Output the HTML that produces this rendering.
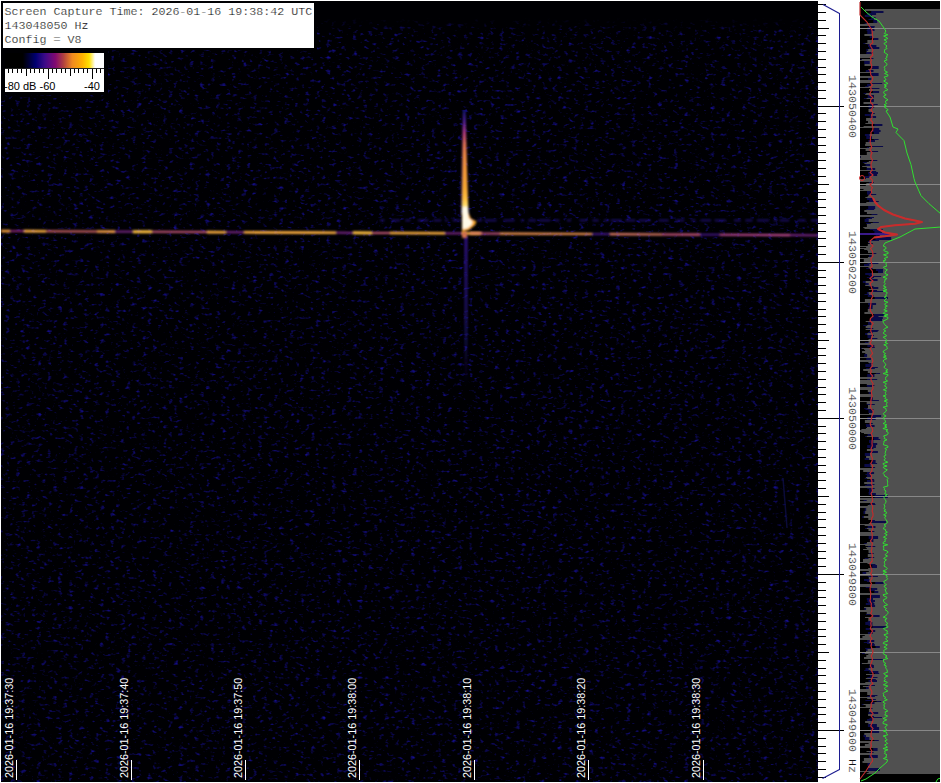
<!DOCTYPE html><html><head><meta charset="utf-8"><style>
html,body{margin:0;padding:0;}body{width:941px;height:783px;position:relative;overflow:hidden;background:#fff;}
.a{position:absolute;}
.mono{font-family:"Liberation Mono",monospace;}
.sans{font-family:"Liberation Sans",sans-serif;}
</style></head><body>
<svg class="a" style="left:0;top:0" width="941" height="783"><defs><filter id="nz" x="0" y="0" width="100%" height="100%" color-interpolation-filters="sRGB"><feTurbulence type="fractalNoise" baseFrequency="0.19 0.3" numOctaves="2" seed="3" result="t"/><feColorMatrix in="t" type="matrix" values="0 0 0 0 0.09  0 0 0 0 0.06  0 0 0 0 0.62  2.9 0 0 0 -1.72" /></filter><linearGradient id="met" gradientUnits="userSpaceOnUse" x1="0" y1="111" x2="0" y2="221"><stop offset="0" stop-color="#1a1a80"/><stop offset="0.09" stop-color="#5020a0"/><stop offset="0.2" stop-color="#b03a80"/><stop offset="0.3" stop-color="#e07050"/><stop offset="0.4" stop-color="#f08a40"/><stop offset="0.7" stop-color="#f8a830"/><stop offset="0.8" stop-color="#ffc040"/><stop offset="0.86" stop-color="#ffe070"/><stop offset="0.9" stop-color="#fff8e0"/><stop offset="1" stop-color="#ffffff"/></linearGradient><filter id="bl" x="-50%" y="-50%" width="200%" height="200%"><feGaussianBlur stdDeviation="0.8"/></filter><linearGradient id="vfade" x1="0" y1="0" x2="0" y2="1"><stop offset="0" stop-color="#3a1aa0" stop-opacity="0.8"/><stop offset="0.6" stop-color="#2a1a9a" stop-opacity="0.5"/><stop offset="1" stop-color="#2a1a9a" stop-opacity="0"/></linearGradient><linearGradient id="topfade" x1="0" y1="0" x2="0" y2="1"><stop offset="0" stop-color="#000003"/><stop offset="0.53" stop-color="#000003"/><stop offset="1" stop-color="#000003" stop-opacity="0"/></linearGradient></defs><rect x="1" y="1" width="817" height="781" fill="#000003"/><rect x="1" y="1" width="817" height="781" filter="url(#nz)"/><rect x="1" y="1" width="817" height="32" fill="url(#topfade)"/><rect x="1" y="1" width="316" height="49" fill="#000003"/><rect x="1" y="50" width="107" height="45" fill="#000003"/><path d="M783 478 L787 528" stroke="#2020a0" stroke-width="1.5" opacity="0.35" fill="none"/><path d="M380 219.3h4.5v2.2h-4.5zM391.3 219.3h8.7v2.2h-8.7zM405.4 219.3h4.9v2.2h-4.9zM417.9 219.3h10.3v2.2h-10.3zM433.7 219.3h7.5v2.2h-7.5zM444.9 219.3h3v2.2h-3zM452.6 219.3h8.3v2.2h-8.3zM463.3 219.3h10.1v2.2h-10.1zM477.1 219.3h5.1v2.2h-5.1zM484.5 219.3h12v2.2h-12zM503.6 219.3h10.9v2.2h-10.9zM520.8 219.3h3.3v2.2h-3.3zM528.4 219.3h7.5v2.2h-7.5zM538.7 219.3h11.6v2.2h-11.6zM554.8 219.3h4.4v2.2h-4.4zM567 219.3h4.1v2.2h-4.1zM579.6 219.3h7.1v2.2h-7.1zM592.5 219.3h6.1v2.2h-6.1zM604 219.3h4.7v2.2h-4.7zM610.9 219.3h10.8v2.2h-10.8zM625.4 219.3h10v2.2h-10zM638.9 219.3h11.7v2.2h-11.7zM658.8 219.3h9.8v2.2h-9.8zM676 219.3h8.2v2.2h-8.2zM691.3 219.3h4.1v2.2h-4.1zM700.7 219.3h10.4v2.2h-10.4zM714.6 219.3h11.3v2.2h-11.3zM734.1 219.3h6.7v2.2h-6.7zM745.4 219.3h7.1v2.2h-7.1zM757.1 219.3h12v2.2h-12zM773.8 219.3h3.2v2.2h-3.2zM779.7 219.3h9.5v2.2h-9.5zM798.1 219.3h7.5v2.2h-7.5zM811 219.3h7v2.2h-7z" fill="#2a18a0" opacity="0.55" filter="url(#bl)"/><rect x="464.5" y="236" width="3" height="150" fill="url(#vfade)" filter="url(#bl)"/><g filter="url(#bl)"><path d="M1 229.7L10 229.8L10 232.4L1 232.3Z" fill="#f8a040"/><path d="M10 230.2L24 230.2L24 232L10 232Z" fill="#9a2c82"/><path d="M24 229.8L46 229.9L46 232.5L24 232.4Z" fill="#ffb040"/><path d="M46 230.2L97 230.5L97 232.6L46 232.3Z" fill="#d8686a"/><path d="M97 230.2L115 230.3L115 232.9L97 232.8Z" fill="#f8a048"/><path d="M115 230.7L133 230.8L133 232.6L115 232.5Z" fill="#8a2a98"/><path d="M133 230.2L152 230.3L152 233.3L133 233.2Z" fill="#ffc040"/><path d="M152 230.7L207 231L207 233.1L152 232.8Z" fill="#c8587a"/><path d="M207 230.8L226 230.9L226 233.5L207 233.4Z" fill="#ffb040"/><path d="M226 231.3L244 231.4L244 233.2L226 233.1Z" fill="#8a2a98"/><path d="M244 231L316 231.3L316 233.9L244 233.6Z" fill="#ffb040"/><path d="M316 231.3L336 231.4L336 234L316 233.9Z" fill="#ffb040"/><path d="M336 231.8L353 231.9L353 233.7L336 233.6Z" fill="#8a2a98"/><path d="M353 231.3L372 231.4L372 234.4L353 234.3Z" fill="#ffc040"/><path d="M372 231.9L390 232L390 234.1L372 234Z" fill="#c8587a"/><path d="M390 231.7L445 232L445 234.6L390 234.3Z" fill="#ffb040"/><path d="M445 232.4L462 232.5L462 234.3L445 234.2Z" fill="#8a2a98"/><path d="M462 232.1L480 232.2L480 234.8L462 234.7Z" fill="#ffb040"/><path d="M480 232.4L500 232.5L500 234.7L480 234.5Z" fill="#b85078"/><path d="M500 232.5L592 233L592 235.1L500 234.7Z" fill="#f89850"/><path d="M592 233.2L610 233.3L610 235.1L592 235Z" fill="#4a1a90"/><path d="M610 233.1L662 233.4L662 235.5L610 235.2Z" fill="#e88068"/><path d="M662 233.4L700 233.6L700 235.7L662 235.5Z" fill="#d05880"/><path d="M700 233.7L720 233.8L720 235.6L700 235.5Z" fill="#4a1a90"/><path d="M720 233.7L790 234.1L790 236.2L720 235.8Z" fill="#c04890"/><path d="M790 234.2L818 234.4L818 236.2L790 236Z" fill="#8a2a98"/></g><g filter="url(#bl)"><path d="M462.5 125 L465.5 125 L468.5 215 L460.5 215 Z" fill="#3a1080" opacity="0.6"/><path d="M463 111 L465.4 111 L467.6 190 L468.5 216 L462 216 L462.2 190 Z" fill="url(#met)"/><path d="M462 213 L468.5 213 L471 218.5 L476.5 221.5 L475 225 L469 230 L462 232 Z" fill="#f8a830"/><path d="M462.3 207 L467.8 207 L468.6 218 L472.5 221.5 L471.5 225 L467 228.5 L462.3 229 Z" fill="#fffae8"/><rect x="462" y="232" width="5" height="6" fill="#d07050"/><rect x="470" y="232" width="12" height="2.4" fill="#d87a60"/></g><rect x="16" y="760" width="1" height="20" fill="#fff"/><rect x="131" y="760" width="1" height="20" fill="#fff"/><rect x="245" y="760" width="1" height="20" fill="#fff"/><rect x="359" y="760" width="1" height="20" fill="#fff"/><rect x="474" y="760" width="1" height="20" fill="#fff"/><rect x="588" y="760" width="1" height="20" fill="#fff"/><rect x="703" y="760" width="1" height="20" fill="#fff"/><rect x="818" y="1" width="42" height="781" fill="#fff"/><path d="M818 4h8v1h-8zM818 12h8v1h-8zM818 20h8v1h-8zM818 28h11v1h-11zM818 35h8v1h-8zM818 43h8v1h-8zM818 51h8v1h-8zM818 59h8v1h-8zM818 67h8v1h-8zM818 74h8v1h-8zM818 82h8v1h-8zM818 90h8v1h-8zM818 98h8v1h-8zM818 106h26v1h-26zM818 113h8v1h-8zM818 121h8v1h-8zM818 129h8v1h-8zM818 137h8v1h-8zM818 145h8v1h-8zM818 152h8v1h-8zM818 160h8v1h-8zM818 168h8v1h-8zM818 176h8v1h-8zM818 184h11v1h-11zM818 192h8v1h-8zM818 199h8v1h-8zM818 207h8v1h-8zM818 215h8v1h-8zM818 223h8v1h-8zM818 231h8v1h-8zM818 238h8v1h-8zM818 246h8v1h-8zM818 254h8v1h-8zM818 262h26v1h-26zM818 270h8v1h-8zM818 277h8v1h-8zM818 285h8v1h-8zM818 293h8v1h-8zM818 301h8v1h-8zM818 309h8v1h-8zM818 316h8v1h-8zM818 324h8v1h-8zM818 332h8v1h-8zM818 340h11v1h-11zM818 348h8v1h-8zM818 355h8v1h-8zM818 363h8v1h-8zM818 371h8v1h-8zM818 379h8v1h-8zM818 387h8v1h-8zM818 394h8v1h-8zM818 402h8v1h-8zM818 410h8v1h-8zM818 418h26v1h-26zM818 426h8v1h-8zM818 433h8v1h-8zM818 441h8v1h-8zM818 449h8v1h-8zM818 457h8v1h-8zM818 465h8v1h-8zM818 472h8v1h-8zM818 480h8v1h-8zM818 488h8v1h-8zM818 496h11v1h-11zM818 504h8v1h-8zM818 512h8v1h-8zM818 519h8v1h-8zM818 527h8v1h-8zM818 535h8v1h-8zM818 543h8v1h-8zM818 551h8v1h-8zM818 558h8v1h-8zM818 566h8v1h-8zM818 574h26v1h-26zM818 582h8v1h-8zM818 590h8v1h-8zM818 597h8v1h-8zM818 605h8v1h-8zM818 613h8v1h-8zM818 621h8v1h-8zM818 629h8v1h-8zM818 636h8v1h-8zM818 644h8v1h-8zM818 652h11v1h-11zM818 660h8v1h-8zM818 668h8v1h-8zM818 675h8v1h-8zM818 683h8v1h-8zM818 691h8v1h-8zM818 699h8v1h-8zM818 707h8v1h-8zM818 714h8v1h-8zM818 722h8v1h-8zM818 730h26v1h-26zM818 738h8v1h-8zM818 746h8v1h-8zM818 753h8v1h-8zM818 761h8v1h-8zM818 769h8v1h-8zM818 777h8v1h-8z" fill="#000" shape-rendering="crispEdges"/><path d="M823 4.5 L839.5 13.5" stroke="#1c1c90" stroke-width="1.1" fill="none"/><rect x="839" y="13" width="1" height="757" fill="#1c1c90"/><path d="M839.5 769.5 L822.5 778.5" stroke="#1c1c90" stroke-width="1.1" fill="none"/><rect x="860" y="1" width="80" height="781" fill="#000"/><rect x="860" y="9" width="80" height="765" fill="#505050"/><path d="M860 11h23.5v2h-23.5zM860 13h16.1v2h-16.1zM860 15h11.9v2h-11.9zM860 17h15.6v2h-15.6zM860 19h14.1v1h-14.1zM860 20h17.2v3h-17.2zM860 23h6.6v1h-6.6zM860 26h14.7v1h-14.7zM860 27h14.4v3h-14.4zM860 30h14.6v1h-14.6zM860 31h11.7v3h-11.7zM860 36h12.4v2h-12.4zM860 38h18.4v2h-18.4zM860 43h5.4v1h-5.4zM860 44h11.6v1h-11.6zM860 45h16.4v2h-16.4zM860 47h19.3v2h-19.3zM860 49h8.2v2h-8.2zM860 52h12.8v2h-12.8zM860 58h13.5v1h-13.5zM860 59h1.9v1h-1.9zM860 61h9.7v3h-9.7zM860 66h18.7v3h-18.7zM860 70h13.5v2h-13.5zM860 73h18.6v3h-18.6zM860 78h11.3v2h-11.3zM860 83h22.2v1h-22.2zM860 84h10.9v2h-10.9zM860 86h8.6v1h-8.6zM860 88h19.4v1h-19.4zM860 91h19.1v2h-19.1zM860 93h6.2v1h-6.2zM860 95h14v3h-14zM860 98h6.6v1h-6.6zM860 99h13.9v3h-13.9zM860 104h17.7v1h-17.7zM860 105h14.2v3h-14.2zM860 108h12.9v1h-12.9zM860 112h12.4v1h-12.4zM860 113h14.8v1h-14.8zM860 114h11.6v2h-11.6zM860 116h16.1v2h-16.1zM860 124h22.4v2h-22.4zM860 128h19.2v2h-19.2zM860 130h20.6v2h-20.6zM860 132h19.2v2h-19.2zM860 134h9.6v2h-9.6zM860 136h12v3h-12zM860 139h18.6v1h-18.6zM860 140h15v2h-15zM860 146h23.1v1h-23.1zM860 147h9v1h-9zM860 151h18.1v1h-18.1zM860 156h0.7v2h-0.7zM860 160h17.3v1h-17.3zM860 162h6.8v1h-6.8zM860 164h10.9v2h-10.9zM860 168h15.2v2h-15.2zM860 171h16.2v1h-16.2zM860 172h18v2h-18zM860 174h17.1v2h-17.1zM860 176h9.5v2h-9.5zM860 182h13.9v1h-13.9zM860 191h11.8v3h-11.8zM860 194h16.2v1h-16.2zM860 198h13.4v2h-13.4zM860 200h14.5v1h-14.5zM860 201h18.8v1h-18.8zM860 206h15.2v3h-15.2zM860 209h14.2v1h-14.2zM860 214h17.4v1h-17.4zM860 217h14v1h-14zM860 218h12v1h-12zM860 219h8.7v3h-8.7zM860 222h18.8v1h-18.8zM860 223h10.8v1h-10.8zM860 229h22.8v1h-22.8zM860 230h21.1v1h-21.1zM860 231h22.1v2h-22.1zM860 233h24.5v1h-24.5zM860 234h29.1v1h-29.1zM860 235h19.8v2h-19.8zM860 237h31.2v1h-31.2zM860 238h31.2v2h-31.2zM860 240h19v1h-19zM860 241h10.2v1h-10.2zM860 243h12.8v1h-12.8zM860 253h16.3v1h-16.3zM860 255h11.6v2h-11.6zM860 262h18.4v2h-18.4zM860 264h9.4v2h-9.4zM860 268h12.6v1h-12.6zM860 269h23.1v2h-23.1zM860 271h23v2h-23zM860 273h11.7v2h-11.7zM860 275h12v1h-12zM860 276h21.2v1h-21.2zM860 277h14v1h-14zM860 278h12.4v1h-12.4zM860 279h17.6v2h-17.6zM860 281h5.7v2h-5.7zM860 283h8.7v2h-8.7zM860 286h13.5v1h-13.5zM860 287h18.3v2h-18.3zM860 290h17.1v1h-17.1zM860 291h23.7v1h-23.7zM860 292h8.6v2h-8.6zM860 294h9.1v1h-9.1zM860 295h13.4v2h-13.4zM860 297h28v2h-28zM860 303h16.1v2h-16.1zM860 305h12.7v2h-12.7zM860 307h12.6v2h-12.6zM860 314h24.6v2h-24.6zM860 316h18.5v1h-18.5zM860 317h22.8v2h-22.8zM860 319h22v2h-22zM860 322h11.2v3h-11.2zM860 325h7.2v1h-7.2zM860 328h13.3v1h-13.3zM860 330h18.6v1h-18.6zM860 331h17.7v1h-17.7zM860 332h12.6v1h-12.6zM860 333h7.4v2h-7.4zM860 335h13.9v1h-13.9zM860 336h11.1v2h-11.1zM860 338h17.4v1h-17.4zM860 342h8.5v1h-8.5zM860 345h14.3v2h-14.3zM860 347h14.8v1h-14.8zM860 348h1.8v1h-1.8zM860 354h7.1v3h-7.1zM860 358h10.9v2h-10.9zM860 363h12.5v1h-12.5zM860 364h11.5v3h-11.5zM860 367h17.8v1h-17.8zM860 368h14.8v1h-14.8zM860 373h20.1v1h-20.1zM860 374h14.4v3h-14.4zM860 379h17.2v1h-17.2zM860 385h14.4v1h-14.4zM860 386h12.1v1h-12.1zM860 392h11.3v2h-11.3zM860 397h12.8v3h-12.8zM860 400h18.9v1h-18.9zM860 404h14.8v1h-14.8zM860 408h7.5v1h-7.5zM860 409h13.4v1h-13.4zM860 410h12.8v3h-12.8zM860 415h21.2v2h-21.2zM860 417h15.7v3h-15.7zM860 423h12.8v1h-12.8zM860 424h9.8v1h-9.8zM860 425h14.6v2h-14.6zM860 434h11.3v2h-11.3zM860 436h6.8v1h-6.8zM860 437h18.6v2h-18.6zM860 439h20.3v1h-20.3zM860 440h13.3v3h-13.3zM860 443h17.2v2h-17.2zM860 445h15.9v3h-15.9zM860 448h13.5v1h-13.5zM860 451h17.9v2h-17.9zM860 453h10v3h-10zM860 458h9.1v2h-9.1zM860 460h15.6v3h-15.6zM860 463h17.1v1h-17.1zM860 464h10.6v3h-10.6zM860 467h15.1v1h-15.1zM860 472h14.1v2h-14.1zM860 474h11.1v1h-11.1zM860 475h11v2h-11zM860 478h7.1v1h-7.1zM860 479h14.1v1h-14.1zM860 480h14.3v2h-14.3zM860 484h14.5v1h-14.5zM860 485h11.9v1h-11.9zM860 488h14.6v1h-14.6zM860 489h12.5v3h-12.5zM860 492h11.2v1h-11.2zM860 493h15.9v2h-15.9zM860 495h27.9v3h-27.9zM860 500h6.7v1h-6.7zM860 503h14.9v1h-14.9zM860 504h15.5v1h-15.5zM860 508h6.2v3h-6.2zM860 511h5.2v3h-5.2zM860 516h3.8v2h-3.8zM860 520h14.9v1h-14.9zM860 521h25.9v2h-25.9zM860 526h15.5v2h-15.5zM860 528h6.8v1h-6.8zM860 531h14.4v1h-14.4zM860 536h18.1v3h-18.1zM860 539h13.4v3h-13.4zM860 543h6.6v1h-6.6zM860 546h15.3v1h-15.3zM860 553h13.7v1h-13.7zM860 557h14.2v1h-14.2zM860 558h8.5v1h-8.5zM860 564h15.5v1h-15.5zM860 565h17v3h-17zM860 572h6.2v3h-6.2zM860 576h17.9v1h-17.9zM860 579h9.5v2h-9.5zM860 581h9.5v1h-9.5zM860 582h23.6v2h-23.6zM860 587h11.1v1h-11.1zM860 588h17.2v2h-17.2zM860 590h14.8v1h-14.8zM860 591h18.3v2h-18.3zM860 595h19.9v3h-19.9zM860 598h13v2h-13zM860 600h15v2h-15zM860 602h13.4v1h-13.4zM860 603h14.4v2h-14.4zM860 605h15.1v2h-15.1zM860 608h6.1v2h-6.1zM860 614h11.5v1h-11.5zM860 615h19.6v2h-19.6zM860 621h11v1h-11zM860 622h12.4v3h-12.4zM860 625h12.5v1h-12.5zM860 626h25.9v2h-25.9zM860 628h11.3v2h-11.3zM860 630h15.2v2h-15.2zM860 632h12.7v2h-12.7zM860 640h14.3v2h-14.3zM860 642h8.9v1h-8.9zM860 643h14.1v1h-14.1zM860 644h14.8v2h-14.8zM860 646h19.8v2h-19.8zM860 648h10.8v1h-10.8zM860 649h7.5v2h-7.5zM860 652h2.9v1h-2.9zM860 653h4.8v1h-4.8zM860 659h23.1v1h-23.1zM860 663h1.9v1h-1.9zM860 664h12.4v1h-12.4zM860 665h13.9v3h-13.9zM860 668h8.6v2h-8.6zM860 670h10.2v1h-10.2zM860 671h18.4v2h-18.4zM860 673h19.2v1h-19.2zM860 675h12.9v2h-12.9zM860 677h17.5v1h-17.5zM860 679h15.8v1h-15.8zM860 680h17v2h-17zM860 685h15v1h-15zM860 687h8.7v2h-8.7zM860 695h17.4v1h-17.4zM860 696h14.9v1h-14.9zM860 699h15.9v1h-15.9zM860 700h13v1h-13zM860 701h21.3v1h-21.3zM860 702h14.5v2h-14.5zM860 704h3.5v1h-3.5zM860 708h12.5v1h-12.5zM860 712h18.2v2h-18.2zM860 716h13.9v1h-13.9zM860 717h22v1h-22zM860 718h12.9v1h-12.9zM860 719h13.1v2h-13.1zM860 724h16.9v3h-16.9zM860 727h19.1v3h-19.1zM860 730h19.1v3h-19.1zM860 735h6v2h-6zM860 737h9.4v3h-9.4zM860 740h18.8v1h-18.8zM860 748h17.6v3h-17.6zM860 752h13.6v1h-13.6zM860 755h17.8v3h-17.8zM860 763h10v3h-10zM860 768h19.8v3h-19.8z" fill="#0a0a48"/><path d="M860 9h4.8v2h-4.8zM860 11h11.2v2h-11.2zM860 13h6.7v2h-6.7zM860 15h4.8v2h-4.8zM860 17h11.1v2h-11.1zM860 19h8.5v1h-8.5zM860 20h13.3v3h-13.3zM860 23h4.7v1h-4.7zM860 26h8.7v1h-8.7zM860 27h7.3v3h-7.3zM860 30h6.6v1h-6.6zM860 31h7.3v3h-7.3zM860 34h4.4v2h-4.4zM860 36h9.7v2h-9.7zM860 38h13.7v2h-13.7zM860 40h7.4v3h-7.4zM860 43h3.4v1h-3.4zM860 44h7.4v1h-7.4zM860 45h8v2h-8zM860 47h9.2v2h-9.2zM860 49h6.4v2h-6.4zM860 51h6.7v1h-6.7zM860 52h6.3v2h-6.3zM860 58h10.2v1h-10.2zM860 59h0.8v1h-0.8zM860 61h4.2v3h-4.2zM860 64h4.5v2h-4.5zM860 66h11v3h-11zM860 69h8.2v1h-8.2zM860 70h5.8v2h-5.8zM860 73h10.9v3h-10.9zM860 78h8.1v2h-8.1zM860 83h11.9v1h-11.9zM860 84h7.1v2h-7.1zM860 86h5.2v1h-5.2zM860 88h10.7v1h-10.7zM860 89h9v2h-9zM860 91h12.8v2h-12.8zM860 93h3.6v1h-3.6zM860 94h5.2v1h-5.2zM860 95h7.7v3h-7.7zM860 98h3.9v1h-3.9zM860 99h10.8v3h-10.8zM860 102h3.5v2h-3.5zM860 104h10.3v1h-10.3zM860 105h8.5v3h-8.5zM860 108h9.3v1h-9.3zM860 109h8.5v3h-8.5zM860 112h9.5v1h-9.5zM860 113h10.5v1h-10.5zM860 114h4.8v2h-4.8zM860 116h9.8v2h-9.8zM860 118h6.1v3h-6.1zM860 121h8v2h-8zM860 123h5.4v1h-5.4zM860 124h14.4v2h-14.4zM860 126h3.6v1h-3.6zM860 128h13.9v2h-13.9zM860 130h12v2h-12zM860 132h13.9v2h-13.9zM860 134h4.9v2h-4.9zM860 136h6.3v3h-6.3zM860 139h13.8v1h-13.8zM860 140h8.2v2h-8.2zM860 142h5.7v2h-5.7zM860 144h5.1v2h-5.1zM860 146h12.2v1h-12.2zM860 147h6.8v1h-6.8zM860 149h5.6v2h-5.6zM860 151h9.8v1h-9.8zM860 152h6.8v3h-6.8zM860 156h0.3v2h-0.3zM860 160h11.1v1h-11.1zM860 161h8.8v1h-8.8zM860 162h2.8v1h-2.8zM860 163h4.4v1h-4.4zM860 164h5.6v2h-5.6zM860 166h2.2v1h-2.2zM860 167h6.8v1h-6.8zM860 168h6.7v2h-6.7zM860 171h10.2v1h-10.2zM860 172h8.1v2h-8.1zM860 174h8.6v2h-8.6zM860 176h4.9v2h-4.9zM860 178h5.7v1h-5.7zM860 182h8.9v1h-8.9zM860 183h6.3v2h-6.3zM860 185h5.8v1h-5.8zM860 189h3.5v1h-3.5zM860 191h7v3h-7zM860 194h7.4v1h-7.4zM860 195h8.4v1h-8.4zM860 196h7.6v1h-7.6zM860 197h5.4v1h-5.4zM860 198h6.9v2h-6.9zM860 200h9.4v1h-9.4zM860 201h9v1h-9zM860 202h6.3v1h-6.3zM860 206h8.2v3h-8.2zM860 209h6.4v1h-6.4zM860 210h4.3v2h-4.3zM860 212h6.9v2h-6.9zM860 214h11.5v1h-11.5zM860 217h10.2v1h-10.2zM860 218h6.3v1h-6.3zM860 219h4.6v3h-4.6zM860 222h12.7v1h-12.7zM860 223h6.1v1h-6.1zM860 224h6.9v3h-6.9zM860 227h3.3v1h-3.3zM860 228h4.5v1h-4.5zM860 229h9.6v1h-9.6zM860 230h13v1h-13zM860 231h14.4v2h-14.4zM860 233h18.7v1h-18.7zM860 234h17.4v1h-17.4zM860 235h15.7v2h-15.7zM860 237h20.5v1h-20.5zM860 238h15.5v2h-15.5zM860 240h9.8v1h-9.8zM860 241h7.8v1h-7.8zM860 242h8.1v1h-8.1zM860 243h8.8v1h-8.8zM860 244h7.8v2h-7.8zM860 247h6.1v1h-6.1zM860 249h4.2v1h-4.2zM860 250h7.4v1h-7.4zM860 251h8v2h-8zM860 253h11.8v1h-11.8zM860 255h8.9v2h-8.9zM860 257h7.9v1h-7.9zM860 259h3.8v3h-3.8zM860 262h7.6v2h-7.6zM860 264h4v2h-4zM860 267h8.5v1h-8.5zM860 268h6.2v1h-6.2zM860 269h15.9v2h-15.9zM860 271h18v2h-18zM860 273h5.2v2h-5.2zM860 275h8.7v1h-8.7zM860 276h10v1h-10zM860 277h6.9v1h-6.9zM860 278h9v1h-9zM860 279h10.5v2h-10.5zM860 281h2.8v2h-2.8zM860 283h5.4v2h-5.4zM860 285h5.2v1h-5.2zM860 286h8.7v1h-8.7zM860 287h12.6v2h-12.6zM860 289h8.9v1h-8.9zM860 290h13.2v1h-13.2zM860 291h11.7v1h-11.7zM860 292h6.9v2h-6.9zM860 294h4.5v1h-4.5zM860 295h7.8v2h-7.8zM860 297h14.7v2h-14.7zM860 299h4.9v3h-4.9zM860 303h8.1v2h-8.1zM860 305h9.1v2h-9.1zM860 307h8.2v2h-8.2zM860 309h7.8v3h-7.8zM860 312h4.4v2h-4.4zM860 314h14v2h-14zM860 316h12.8v1h-12.8zM860 317h11.3v2h-11.3zM860 319h9.7v2h-9.7zM860 321h5.7v1h-5.7zM860 322h8.1v3h-8.1zM860 325h3.3v1h-3.3zM860 326h5.7v2h-5.7zM860 328h7.4v1h-7.4zM860 329h5.6v1h-5.6zM860 330h11v1h-11zM860 331h9.3v1h-9.3zM860 332h7.9v1h-7.9zM860 333h5.1v2h-5.1zM860 335h7.4v1h-7.4zM860 336h7.5v2h-7.5zM860 338h9.6v1h-9.6zM860 339h8.6v3h-8.6zM860 342h4.9v1h-4.9zM860 345h7.4v2h-7.4zM860 347h11.2v1h-11.2zM860 348h0.8v1h-0.8zM860 349h4.1v1h-4.1zM860 350h5.1v1h-5.1zM860 351h2.1v2h-2.1zM860 353h5.3v1h-5.3zM860 354h4.3v3h-4.3zM860 358h6.3v2h-6.3zM860 362h8.4v1h-8.4zM860 363h9.1v1h-9.1zM860 364h5.4v3h-5.4zM860 367h10.4v1h-10.4zM860 368h6.2v1h-6.2zM860 369h3.2v2h-3.2zM860 371h7.8v2h-7.8zM860 373h15.8v1h-15.8zM860 374h7.2v3h-7.2zM860 379h7.2v1h-7.2zM860 384h6.8v1h-6.8zM860 385h6.7v1h-6.7zM860 386h7.2v1h-7.2zM860 390h7.8v2h-7.8zM860 392h8.7v2h-8.7zM860 397h9.8v3h-9.8zM860 400h10.5v1h-10.5zM860 402h6.7v2h-6.7zM860 404h6.7v1h-6.7zM860 405h8v3h-8zM860 408h4.1v1h-4.1zM860 409h5.5v1h-5.5zM860 410h8.5v3h-8.5zM860 413h9v1h-9zM860 415h10.9v2h-10.9zM860 417h7.3v3h-7.3zM860 420h4.9v3h-4.9zM860 423h9.7v1h-9.7zM860 424h5.8v1h-5.8zM860 425h6.1v2h-6.1zM860 427h7v1h-7zM860 428h5.9v1h-5.9zM860 429h1.4v1h-1.4zM860 432h1.2v1h-1.2zM860 433h4v1h-4zM860 434h7.6v2h-7.6zM860 436h5v1h-5zM860 437h13.4v2h-13.4zM860 439h13.8v1h-13.8zM860 440h9v3h-9zM860 443h10.3v2h-10.3zM860 445h7.2v3h-7.2zM860 448h10v1h-10zM860 449h6.9v2h-6.9zM860 451h10v2h-10zM860 453h4.8v3h-4.8zM860 456h6.1v2h-6.1zM860 458h4.7v2h-4.7zM860 460h12.3v3h-12.3zM860 463h9.5v1h-9.5zM860 464h4.4v3h-4.4zM860 467h11.5v1h-11.5zM860 470h3.2v2h-3.2zM860 472h6.9v2h-6.9zM860 474h5.5v1h-5.5zM860 475h6.9v2h-6.9zM860 477h5.9v1h-5.9zM860 478h4.7v1h-4.7zM860 479h10.5v1h-10.5zM860 480h6.9v2h-6.9zM860 482h4.2v2h-4.2zM860 484h6.8v1h-6.8zM860 485h4.9v1h-4.9zM860 488h7.3v1h-7.3zM860 489h9v3h-9zM860 492h8.5v1h-8.5zM860 493h8.7v2h-8.7zM860 495h14.6v3h-14.6zM860 500h3.6v1h-3.6zM860 503h11.2v1h-11.2zM860 504h9.1v1h-9.1zM860 505h7.7v1h-7.7zM860 508h4.7v3h-4.7zM860 511h3.5v3h-3.5zM860 514h8.2v2h-8.2zM860 516h2.2v2h-2.2zM860 518h8.3v2h-8.3zM860 520h11.8v1h-11.8zM860 521h11.5v2h-11.5zM860 523h8.8v1h-8.8zM860 525h4.7v1h-4.7zM860 526h7.7v2h-7.7zM860 528h5v1h-5zM860 529h8.5v2h-8.5zM860 531h10.5v1h-10.5zM860 536h8.7v3h-8.7zM860 539h9.9v3h-9.9zM860 542h7v1h-7zM860 543h4.3v1h-4.3zM860 545h5.3v1h-5.3zM860 546h7.8v1h-7.8zM860 547h5.8v1h-5.8zM860 548h6.8v1h-6.8zM860 549h3.1v1h-3.1zM860 550h8.5v3h-8.5zM860 553h9.3v1h-9.3zM860 554h7.8v3h-7.8zM860 557h10v1h-10zM860 558h4.7v1h-4.7zM860 559h3v3h-3zM860 563h7.5v1h-7.5zM860 564h10.2v1h-10.2zM860 565h12.2v3h-12.2zM860 568h8.2v1h-8.2zM860 571h8.8v1h-8.8zM860 572h2.5v3h-2.5zM860 576h7.8v1h-7.8zM860 577h8.8v2h-8.8zM860 579h4v2h-4zM860 581h6.9v1h-6.9zM860 582h15.2v2h-15.2zM860 587h5.7v1h-5.7zM860 588h11.3v2h-11.3zM860 590h9.8v1h-9.8zM860 591h14.3v2h-14.3zM860 595h11.4v3h-11.4zM860 598h6.8v2h-6.8zM860 600h7.3v2h-7.3zM860 602h8.2v1h-8.2zM860 603h5.8v2h-5.8zM860 605h11.1v2h-11.1zM860 607h4.1v1h-4.1zM860 608h4.4v2h-4.4zM860 612h6.7v2h-6.7zM860 614h5.9v1h-5.9zM860 615h12.8v2h-12.8zM860 617h5v1h-5zM860 618h8.3v3h-8.3zM860 621h7.7v1h-7.7zM860 622h5.3v3h-5.3zM860 625h8.5v1h-8.5zM860 626h12.5v2h-12.5zM860 628h5.7v2h-5.7zM860 630h11.8v2h-11.8zM860 632h7.9v2h-7.9zM860 635h4.8v1h-4.8zM860 636h2.4v2h-2.4zM860 640h7.2v2h-7.2zM860 642h3.8v1h-3.8zM860 643h7v1h-7zM860 644h10.1v2h-10.1zM860 646h15.6v2h-15.6zM860 648h5.2v1h-5.2zM860 649h6v2h-6zM860 651h6v1h-6zM860 652h1.4v1h-1.4zM860 653h2v1h-2zM860 654h8.3v1h-8.3zM860 655h6.3v2h-6.3zM860 657h4v2h-4zM860 659h11.4v1h-11.4zM860 660h7.9v2h-7.9zM860 662h7.7v1h-7.7zM860 663h1.5v1h-1.5zM860 664h9.7v1h-9.7zM860 665h9.4v3h-9.4zM860 668h5.5v2h-5.5zM860 670h4.2v1h-4.2zM860 671h9.4v2h-9.4zM860 673h14.8v1h-14.8zM860 674h6v1h-6zM860 675h9.9v2h-9.9zM860 677h7.2v1h-7.2zM860 678h5.8v1h-5.8zM860 679h11.6v1h-11.6zM860 680h8.5v2h-8.5zM860 682h5.3v1h-5.3zM860 685h8v1h-8zM860 686h2.9v1h-2.9zM860 687h6v2h-6zM860 692h7.2v3h-7.2zM860 695h9.6v1h-9.6zM860 696h7.2v1h-7.2zM860 698h7.2v1h-7.2zM860 699h12.3v1h-12.3zM860 700h5.4v1h-5.4zM860 701h16.6v1h-16.6zM860 702h10.8v2h-10.8zM860 704h1.8v1h-1.8zM860 705h5.7v2h-5.7zM860 708h9.8v1h-9.8zM860 709h8.9v3h-8.9zM860 712h8.4v2h-8.4zM860 714h8.1v2h-8.1zM860 716h10.9v1h-10.9zM860 717h12.9v1h-12.9zM860 718h9.5v1h-9.5zM860 719h7.1v2h-7.1zM860 721h5.1v2h-5.1zM860 723h8.4v1h-8.4zM860 724h7.9v3h-7.9zM860 727h10.2v3h-10.2zM860 730h11.5v3h-11.5zM860 733h4.3v2h-4.3zM860 735h3.5v2h-3.5zM860 737h4.8v3h-4.8zM860 740h14.3v1h-14.3zM860 743h8.6v1h-8.6zM860 744h4.9v2h-4.9zM860 748h13.2v3h-13.2zM860 751h6.5v1h-6.5zM860 752h9.1v1h-9.1zM860 755h8.9v3h-8.9zM860 758h3.9v2h-3.9zM860 760h4v1h-4zM860 761h2.5v2h-2.5zM860 763h7.5v3h-7.5zM860 766h8v2h-8zM860 768h8.1v3h-8.1zM860 772h8.6v1h-8.6zM860 773h6.7v1h-6.7z" fill="#000"/><path d="M860 233h33v2h-33z" fill="#3a1a8a"/><rect x="860" y="28" width="80" height="1" fill="#888888"/><rect x="860" y="106" width="80" height="1" fill="#888888"/><rect x="860" y="184" width="80" height="1" fill="#888888"/><rect x="860" y="262" width="80" height="1" fill="#888888"/><rect x="860" y="340" width="80" height="1" fill="#888888"/><rect x="860" y="418" width="80" height="1" fill="#888888"/><rect x="860" y="496" width="80" height="1" fill="#888888"/><rect x="860" y="574" width="80" height="1" fill="#888888"/><rect x="860" y="652" width="80" height="1" fill="#888888"/><rect x="860" y="730" width="80" height="1" fill="#888888"/><polyline points="860,2 860,15 867,22 870,27 871.9,30 872.3,32.5 872.4,35 872.9,37.5 872.3,40 872.9,42.5 870,45 871.4,47.5 872.9,50 872,52.5 872.8,55 870.3,57.5 871.4,60 870.7,62.5 871.6,65 871.7,67.5 869.9,70 870.6,72.5 870.8,75 872.8,77.5 872.4,80 870.4,82.5 872.5,85 870.3,87.5 871.9,90 870.3,92.5 869.9,95 872.7,97.5 870.6,100 870.6,102.5 873,105 872.7,107.5 870.8,110 873,112.5 871.6,115 872.1,117.5 870.6,120 872.9,122.5 872.1,125 873,127.5 872.8,130 870.9,132.5 871.1,135 870.4,137.5 870.4,140 870.1,142.5 870.9,145 871.8,147.5 869.9,150 872.1,152.5 871,155 870.9,157.5 872.5,160 871.4,162.5 870.9,165 871.4,167.5 872.2,170 870.1,172.5 873,175 870,177.5 872.3,180 872.6,182.5 870,185 872.4,187.5 871.1,190 871.8,192.5 869.9,195 873,198 875,202 878,205.5 884,210 893,214.5 905,218.5 915,220.5 922,222 915,223.8 895,225.2 881,227 878,229 885,232.5 897,234.5 885,236.2 874,237.5 870,241 870.5,243.5 873,246 870.5,248.5 872.3,251 872.9,253.5 872.9,256 871,258.5 871,261 871.6,263.5 872.4,266 870.2,268.5 872.3,271 872.5,273.5 872.7,276 870,278.5 872.9,281 870.2,283.5 871,286 871.9,288.5 872.8,291 871,293.5 872.9,296 871.6,298.5 870.9,301 870.9,303.5 870.5,306 870.2,308.5 870.4,311 872.1,313.5 873.1,316 870.4,318.5 870.1,321 873.1,323.5 871.6,326 871.2,328.5 870.7,331 871.8,333.5 872.5,336 871.4,338.5 871.2,341 870.1,343.5 872.8,346 870,348.5 871.5,351 872.6,353.5 870.3,356 872.2,358.5 872.9,361 871.9,363.5 872.4,366 870.2,368.5 871.3,371 870.4,373.5 872.6,376 870.8,378.5 871.4,381 873.1,383.5 872.6,386 873,388.5 871.4,391 871.5,393.5 872.2,396 871.4,398.5 870.8,401 871.2,403.5 870.4,406 871.1,408.5 873.1,411 873,413.5 871.9,416 871.5,418.5 871,421 870.2,423.5 870.8,426 872.4,428.5 872.7,431 871.1,433.5 872.4,436 872.4,438.5 872.1,441 872,443.5 872.3,446 871.1,448.5 872.2,451 870.8,453.5 871.5,456 872.4,458.5 872.1,461 870.8,463.5 872.9,466 872,468.5 871.8,471 869.9,473.5 871.7,476 870.7,478.5 872,481 871.4,483.5 872.5,486 872,488.5 872.5,491 871,493.5 872,496 872.3,498.5 872.6,501 871,503.5 872.6,506 872.7,508.5 872.1,511 873,513.5 873,516 871.6,518.5 871.6,521 870.4,523.5 872.6,526 872.9,528.5 871.4,531 872.1,533.5 872.2,536 872.2,538.5 870.4,541 872.4,543.5 871.8,546 872,548.5 871.2,551 871.9,553.5 872.4,556 871.9,558.5 872.2,561 870,563.5 870.4,566 871.3,568.5 872,571 870.6,573.5 872.1,576 871.9,578.5 870,581 871.4,583.5 870.6,586 870.1,588.5 870.3,591 870.9,593.5 870.5,596 870.5,598.5 870,601 871.4,603.5 871.1,606 871.9,608.5 871.8,611 870.7,613.5 872.8,616 869.9,618.5 871.2,621 870.8,623.5 871.2,626 870.3,628.5 872.6,631 871.1,633.5 870,636 871.9,638.5 870.2,641 871.6,643.5 871,646 871.8,648.5 873,651 872.5,653.5 871.2,656 872.5,658.5 872,661 871.1,663.5 870.4,666 871.8,668.5 871.7,671 873,673.5 873,676 871.8,678.5 871,681 872.8,683.5 869.9,686 870.2,688.5 871.7,691 871.9,693.5 870.4,696 871.9,698.5 872.8,701 871.1,703.5 871.3,706 870.6,708.5 870.8,711 873,713.5 871.1,716 873,718.5 872.8,721 871.8,723.5 870.7,726 873,728.5 871.5,731 871.2,733.5 870.9,736 873,738.5 871.5,741 870.8,743.5 871.4,746 870.3,748.5 871.9,751 871.3,753.5 870.8,756 872.4,758.5 872.5,761 871,763 866,771 860,779" fill="none" stroke="#c02c2c" stroke-width="1.15"/><polyline points="873,198 875,202 878,205.5 884,210 893,214.5 905,218.5 915,220.5 922,222 915,223.8 895,225.2 881,227 878,229 885,232.5 897,234.5 885,236.2 874,237.5" fill="none" stroke="#c82c2c" stroke-width="2" stroke-linejoin="round"/><circle cx="862" cy="178" r="2.5" fill="none" stroke="#d03030" stroke-width="1"/><polyline points="861,7 866,12 872,17 879,21 884,28 885.8,31 885.4,32.2 884.3,33.5 887.8,34.8 883.6,36 886,37.2 887.9,38.5 884,39.8 886.3,41 886.6,42.2 883.8,43.5 885.4,44.8 887,46 885.8,47.2 887.1,48.5 884.4,49.8 884.7,51 884.1,52.2 886,53.5 888,54.8 886.4,56 887.3,57.2 885.4,58.5 887.2,59.8 884.1,61 885,62.2 886.8,63.5 887.1,64.8 885.6,66 884,67.2 884.9,68.5 884.6,69.8 884.9,71 887.5,72.2 884.6,73.5 887.9,74.8 887.8,76 883.9,77.2 885.4,78.5 886,79.8 883.7,81 885.6,82.2 888,83.5 884.1,84.8 886.5,86 884.2,87.2 886.4,88.5 887.9,89.8 884.6,91 883.6,92.2 884,93.5 886.2,94.8 883.7,96 884,97.2 886,98.5 888,99.8 885.6,101 885.5,102.2 886.7,103.5 884,104.8 886.4,106 884.4,107.2 886.5,108.5 888.2,109.8 886,111 890,117 893,127 898,129 896,132.5 904,140.6 907,153 911,164.7 914,178.5 915,182 921,195.7 929,203.7 941,214" fill="none" stroke="#30e030" stroke-width="1"/><polyline points="941,227 915,229 900,237 885,243 883.2,246 885.8,247.2 886.1,248.5 883.7,249.8 884.3,251 888.1,252.2 888.1,253.5 883.5,254.8 886.6,256 887.8,257.2 884.1,258.5 886.1,259.8 883.1,261 884.8,262.2 886.4,263.5 886,264.8 886.9,266 883.4,267.2 884.7,268.5 887.4,269.8 885.9,271 885.2,272.2 885,273.5 888,274.8 885.9,276 883,277.2 887.1,278.5 884.6,279.8 885.2,281 884,282.2 885.2,283.5 884.6,284.8 883.4,286 886.2,287.2 883.4,288.5 887,289.8 883,291 887,292.2 887.1,293.5 885.5,294.8 886.6,296 884.2,297.2 886.7,298.5 885.1,299.8 884.1,301 887.9,302.2 885,303.5 884.8,304.8 887.4,306 884.8,307.2 886.4,308.5 883.8,309.8 887.3,311 884.2,312.2 883.2,313.5 888,314.8 883.8,316 887.8,317.2 888,318.5 886.1,319.8 883,321 883.2,322.2 884,323.5 884.9,324.8 886.1,326 887.9,327.2 884.7,328.5 883.6,329.8 885.8,331 883.6,332.2 883.4,333.5 885.8,334.8 886.5,336 883.2,337.2 885.2,338.5 886.6,339.8 886.9,341 884.9,342.2 887.5,343.5 883.8,344.8 886.6,346 886.9,347.2 887.5,348.5 885.5,349.8 883.4,351 883.2,352.2 885.6,353.5 883.8,354.8 886.2,356 883.3,357.2 887,358.5 884.1,359.8 883,361 883.8,362.2 885.3,363.5 885.8,364.8 884.9,366 883.8,367.2 885.4,368.5 887.8,369.8 885.7,371 887.8,372.2 883,373.5 888.1,374.8 887.5,376 885.7,377.2 885.6,378.5 885.7,379.8 887.6,381 883.2,382.2 886.2,383.5 885.7,384.8 884.5,386 886.7,387.2 886.6,388.5 883.4,389.8 886.5,391 885.3,392.2 885.4,393.5 886.2,394.8 883.2,396 886,397.2 884.8,398.5 887.5,399.8 884.1,401 887.2,402.2 886.7,403.5 886.1,404.8 887.5,406 883.1,407.2 886,408.5 886.1,409.8 886.4,411 885,412.2 883.3,413.5 883.9,414.8 886.1,416 883.8,417.2 883.2,418.5 884.7,419.8 885.3,421 885.7,422.2 883,423.5 886.9,424.8 884.6,426 887,427.2 882.9,428.5 887.9,429.8 886,431 888,432.2 888,433.5 887.2,434.8 883.5,436 884.7,437.2 884.1,438.5 887,439.8 883.9,441 884.1,442.2 883.5,443.5 883.5,444.8 887.8,446 888,447.2 884.8,448.5 886.8,449.8 885.3,451 885.6,452.2 884.8,453.5 886.2,454.8 884.1,456 884.2,457.2 885.6,458.5 883.9,459.8 885.2,461 887.8,462.2 883,463.5 883.4,464.8 887.1,466 883.2,467.2 884.2,468.5 887.3,469.8 886,471 884,472.2 883.2,473.5 884.3,474.8 884.5,476 887.1,477.2 888,478.5 887,479.8 887.6,481 887.7,482.2 887.5,483.5 887.7,484.8 887.9,486 883.4,487.2 884.6,488.5 884.2,489.8 886,491 885.5,492.2 884.7,493.5 887.3,494.8 885,496 884,497.2 884.3,498.5 885.3,499.8 886.1,501 885.9,502.2 885.2,503.5 883.9,504.8 885,506 884.6,507.2 883.8,508.5 885.7,509.8 883.9,511 886.6,512.2 886.3,513.5 883.6,514.8 886.2,516 884.7,517.2 885.2,518.5 886.1,519.8 886.9,521 887.5,522.2 886.7,523.5 884,524.8 885.7,526 884.6,527.2 883,528.5 885.8,529.8 885.3,531 887.4,532.2 884.6,533.5 887.2,534.8 885.6,536 883.4,537.2 886.6,538.5 884.4,539.8 885.7,541 883.3,542.2 883,543.5 887.7,544.8 883.1,546 883.7,547.2 883.7,548.5 883.4,549.8 887.2,551 888.1,552.2 886.3,553.5 885,554.8 887.5,556 885.5,557.2 883.6,558.5 886.5,559.8 884.8,561 884.3,562.2 884.6,563.5 884.9,564.8 883.8,566 886.1,567.2 887.4,568.5 885.9,569.8 882.9,571 886.5,572.2 883,573.5 885.4,574.8 887.4,576 886.4,577.2 887.6,578.5 886.8,579.8 884.3,581 883.6,582.2 885.2,583.5 886.4,584.8 884.1,586 884.6,587.2 886.8,588.5 884.7,589.8 886,591 885.7,592.2 887.7,593.5 883,594.8 883.9,596 886.9,597.2 886.4,598.5 883.4,599.8 883.6,601 884,602.2 885.7,603.5 887.6,604.8 884,606 884,607.2 886.5,608.5 885.1,609.8 887.3,611 888.1,612.2 887.8,613.5 886.6,614.8 885.5,616 883.2,617.2 887.1,618.5 885,619.8 885.3,621 886.2,622.2 887.9,623.5 885.8,624.8 887.7,626 887.9,627.2 883.3,628.5 884.7,629.8 887.5,631 886.9,632.2 887.9,633.5 883.9,634.8 885.7,636 887.8,637.2 885.7,638.5 886.4,639.8 888,641 883.8,642.2 883.2,643.5 887.3,644.8 885.9,646 883.9,647.2 887.2,648.5 884.4,649.8 883.6,651 884.4,652.2 883.1,653.5 885,654.8 887,656 885.3,657.2 887.9,658.5 883.1,659.8 883.8,661 883.6,662.2 885.9,663.5 883.9,664.8 886.4,666 885.6,667.2 885.9,668.5 887.3,669.8 887,671 887.7,672.2 883.7,673.5 884.9,674.8 887.9,676 885,677.2 884.4,678.5 885.4,679.8 883.8,681 887.3,682.2 886.2,683.5 883.4,684.8 887.9,686 885.6,687.2 884.2,688.5 886.1,689.8 887.8,691 884.7,692.2 883,693.5 883.9,694.8 883.2,696 885.6,697.2 884.5,698.5 887.3,699.8 884,701 883,702.2 885.3,703.5 883.5,704.8 884.5,706 884.1,707.2 883.8,708.5 886.2,709.8 887.8,711 884.8,712.2 886.2,713.5 884.6,714.8 887.7,716 885.8,717.2 883.1,718.5 886.8,719.8 884,721 883.1,722.2 883,723.5 887.3,724.8 886.6,726 884.8,727.2 885.8,728.5 886.6,729.8 883.3,731 886.6,732.2 886.6,733.5 887.8,734.8 883.2,736 885.9,737.2 885.5,738.5 887.3,739.8 884.8,741 886.3,742.2 887.6,743.5 884.7,744.8 885.6,746 887.5,747.2 883.1,748.5 888,749.8 884.5,751 885.3,752.2 884.4,753.5 887,754.8 885.7,756 886.8,757.2 883.4,758.5 887.5,759.8 887.2,761 887,762 880,768 875,773 866,779 861,781" fill="none" stroke="#30e030" stroke-width="1"/><path d="M936 782 Q937 778 941 778" fill="none" stroke="#30e030" stroke-width="1"/><rect x="0" y="0" width="941" height="1" fill="#fff"/><rect x="0" y="782" width="941" height="1" fill="#fff"/><rect x="0" y="0" width="1" height="783" fill="#fff"/><rect x="940" y="0" width="1" height="783" fill="#fff"/></svg>
<div class="a" style="left:3px;top:3px;width:311px;height:45px;background:#fff"></div>
<div class="a mono" style="left:4.5px;top:5px;font-size:11.67px;line-height:14px;color:#111;white-space:pre;-webkit-text-stroke:0.22px #fff">Screen Capture Time: 2026-01-16 19:38:42 UTC</div>
<div class="a mono" style="left:4.5px;top:18.9px;font-size:11.67px;line-height:14px;color:#111;white-space:pre;-webkit-text-stroke:0.22px #fff">143048050 Hz</div>
<div class="a mono" style="left:4.5px;top:32.7px;font-size:11.67px;line-height:14px;color:#111;white-space:pre;-webkit-text-stroke:0.22px #fff">Config = V8</div>
<div class="a" style="left:5px;top:53px;width:99px;height:15px;background:linear-gradient(to right,#000 0%,#000 18%,#000070 31%,#3a0a88 40%,#5a0a80 45%,#820a70 51%,#b04040 59%,#f08a20 68%,#ffb000 78%,#ffe000 85%,#fff 91%,#fff 100%)"></div>
<div class="a" style="left:5px;top:68px;width:99px;height:24px;background:#fff"></div>
<div class="a" style="left:5px;top:68px;width:99px;height:1px;background:#222"></div>
<svg class="a" style="left:0;top:0" width="120" height="100"><path d="M8 69h1v4h-1zM12 69h1v4h-1zM17 69h1v4h-1zM21 69h1v4h-1zM26 69h1v7h-1zM30 69h1v4h-1zM34 69h1v4h-1zM39 69h1v4h-1zM43 69h1v4h-1zM48 69h1v10h-1zM52 69h1v4h-1zM56 69h1v4h-1zM61 69h1v4h-1zM65 69h1v4h-1zM70 69h1v7h-1zM74 69h1v4h-1zM78 69h1v4h-1zM83 69h1v4h-1zM87 69h1v4h-1zM92 69h1v10h-1zM96 69h1v4h-1zM100 69h1v4h-1z" fill="#000" shape-rendering="crispEdges"/></svg>
<div class="a sans" style="left:4px;top:80px;font-size:11px;line-height:12px;color:#000;white-space:pre">-80 dB -60</div>
<div class="a sans" style="left:84px;top:80px;font-size:11px;line-height:12px;color:#000;white-space:pre">-40</div>
<div class="a sans" style="left:3.4px;top:778px;transform-origin:0 0;transform:rotate(-90deg);font-size:10.8px;line-height:12px;color:#fff;white-space:pre">2026-01-16 19:37:30</div>
<div class="a sans" style="left:118.4px;top:778px;transform-origin:0 0;transform:rotate(-90deg);font-size:10.8px;line-height:12px;color:#fff;white-space:pre">2026-01-16 19:37:40</div>
<div class="a sans" style="left:232.4px;top:778px;transform-origin:0 0;transform:rotate(-90deg);font-size:10.8px;line-height:12px;color:#fff;white-space:pre">2026-01-16 19:37:50</div>
<div class="a sans" style="left:346.4px;top:778px;transform-origin:0 0;transform:rotate(-90deg);font-size:10.8px;line-height:12px;color:#fff;white-space:pre">2026-01-16 19:38:00</div>
<div class="a sans" style="left:461.4px;top:778px;transform-origin:0 0;transform:rotate(-90deg);font-size:10.8px;line-height:12px;color:#fff;white-space:pre">2026-01-16 19:38:10</div>
<div class="a sans" style="left:575.4px;top:778px;transform-origin:0 0;transform:rotate(-90deg);font-size:10.8px;line-height:12px;color:#fff;white-space:pre">2026-01-16 19:38:20</div>
<div class="a sans" style="left:690.4px;top:778px;transform-origin:0 0;transform:rotate(-90deg);font-size:10.8px;line-height:12px;color:#fff;white-space:pre">2026-01-16 19:38:30</div>
<div class="a mono" style="left:858px;top:75px;transform-origin:0 0;transform:rotate(90deg);font-size:11.67px;line-height:13px;color:#111;white-space:pre;-webkit-text-stroke:0.22px #fff">143050400</div>
<div class="a mono" style="left:858px;top:231px;transform-origin:0 0;transform:rotate(90deg);font-size:11.67px;line-height:13px;color:#111;white-space:pre;-webkit-text-stroke:0.22px #fff">143050200</div>
<div class="a mono" style="left:858px;top:387px;transform-origin:0 0;transform:rotate(90deg);font-size:11.67px;line-height:13px;color:#111;white-space:pre;-webkit-text-stroke:0.22px #fff">143050000</div>
<div class="a mono" style="left:858px;top:543px;transform-origin:0 0;transform:rotate(90deg);font-size:11.67px;line-height:13px;color:#111;white-space:pre;-webkit-text-stroke:0.22px #fff">143049800</div>
<div class="a mono" style="left:858px;top:688.5px;transform-origin:0 0;transform:rotate(90deg);font-size:11.67px;line-height:13px;color:#111;white-space:pre;-webkit-text-stroke:0.22px #fff">143049600 Hz</div>
</body></html>
